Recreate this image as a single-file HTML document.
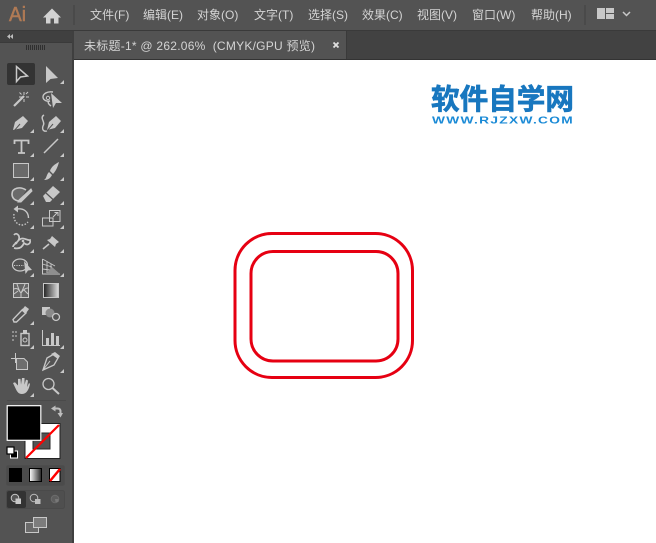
<!DOCTYPE html>
<html><head><meta charset="utf-8">
<style>
html,body{margin:0;padding:0;width:656px;height:543px;overflow:hidden;background:#535353}
svg{display:block}
text{font-family:"Liberation Sans","Noto Sans CJK SC",sans-serif}
.m{font-size:12px;fill:#d4d4d4}
</style></head><body>
<svg width="656" height="543" viewBox="0 0 656 543" xmlns="http://www.w3.org/2000/svg">
<rect width="656" height="543" fill="#535353"/>
<!-- top bar -->
<rect x="0" y="30" width="656" height="1" fill="#3a3a3a"/>
<text x="9" y="21" font-size="20" fill="#b07a55" stroke="#b07a55" stroke-width="0.5" textLength="17" lengthAdjust="spacingAndGlyphs">Ai</text>
<path d="M52 8.500 L43 17.500 H46 V23.500 H50.500 V18.500 H54 V23.500 H58.500 V17.500 H61 Z" fill="#d2d2d2"/>
<rect x="73" y="5" width="2" height="20" fill="#4a4a4a"/>
<text class="m" x="90" y="19">文件(F)</text>
<text class="m" x="143" y="19">编辑(E)</text>
<text class="m" x="197" y="19">对象(O)</text>
<text class="m" x="254" y="19">文字(T)</text>
<text class="m" x="308" y="19">选择(S)</text>
<text class="m" x="362" y="19">效果(C)</text>
<text class="m" x="417" y="19">视图(V)</text>
<text class="m" x="472" y="19">窗口(W)</text>
<text class="m" x="531" y="19">帮助(H)</text>
<rect x="584" y="5" width="2" height="20" fill="#4a4a4a"/>
<rect x="597" y="8" width="8" height="11" fill="#c8c8c8"/><rect x="606" y="8" width="8" height="5" fill="#c8c8c8"/><rect x="606" y="14" width="8" height="5" fill="#c8c8c8"/>
<path d="M623 12 L626.500 15.500 L630 12" fill="none" stroke="#c8c8c8" stroke-width="1.500"/>
<!-- tab bar -->
<rect x="73" y="31" width="583" height="29" fill="#424242"/>
<rect x="74" y="31" width="272" height="28" fill="#535353"/>
<rect x="346" y="31" width="1" height="28" fill="#3a3a3a"/>
<rect x="73" y="59" width="583" height="1" fill="#333"/>
<text x="84" y="50" font-size="12" fill="#d4d4d4" xml:space="preserve" textLength="231">未标题-1* @ 262.06%  (CMYK/GPU 预览)</text>
<path d="M333.500 42.500 L338.500 47.500 M338.500 42.500 L333.500 47.500" stroke="#e0e0e0" stroke-width="1.800"/>
<!-- canvas -->
<rect x="74" y="60" width="582" height="483" fill="#fff"/>
<!-- left panel -->
<rect x="72" y="31" width="2" height="512" fill="#3f3f3f"/>
<rect x="0" y="31" width="72" height="11" fill="#404040"/>
<rect x="0" y="42" width="72" height="1" fill="#3a3a3a"/>
<path d="M10 34 L7 36.500 L10 39 Z M13 34 L10 36.500 L13 39 Z" fill="#bdbdbd"/>
<path d="M26.500 45 v5 M28.500 45 v5 M30.500 45 v5 M32.500 45 v5 M34.500 45 v5 M36.500 45 v5 M38.500 45 v5 M40.500 45 v5 M42.500 45 v5 M44.500 45 v5" stroke="#2f2f2f" stroke-width="1"/>
<!-- selection -->
<rect x="7" y="63" width="28" height="22" rx="2" fill="#333"/>
<path d="M16.500 66.500 V81.500 L20.500 77 L27.500 76 Z" fill="none" stroke="#c8c8c8" stroke-width="1.500"/>
<path d="M46 66 V83 L50.500 79 L58 78 Z" fill="#c8c8c8"/>
<g fill="#c8c8c8">
<path d="M64 80 V84 H60 Z"/>
<path d="M34 129 v4 h-4Z M64 129 v4 h-4Z M34 153 v4 h-4Z M64 153 v4 h-4Z M34 177 v4 h-4Z M64 177 v4 h-4Z M34 201 v4 h-4Z M64 201 v4 h-4Z M34 225 v4 h-4Z M64 225 v4 h-4Z M34 249 v4 h-4Z M64 249 v4 h-4Z M34 273 v4 h-4Z M64 273 v4 h-4Z M34 321 v4 h-4Z M34 345 v4 h-4Z M64 345 v4 h-4Z M64 369 v4 h-4Z M34 393 v4 h-4Z"/>
</g>
<!-- wand -->
<path d="M14 106 L24 96" stroke="#c8c8c8" stroke-width="2.200"/>
<path d="M24 92 v3 M24 99 v3 M19 97 h3 M26 97 h3 M19.500 92.500 l2 2 M28 92 l-2 2" stroke="#c8c8c8" stroke-width="1"/>
<!-- lasso -->
<path d="M53 92 C47 91 43 94 43 97 C43 100 47 102 50 101 M50 101 C47 101 48 104 51 106" fill="none" stroke="#c8c8c8" stroke-width="1.400"/>
<circle cx="48" cy="98" r="1.700" fill="none" stroke="#c8c8c8"/>
<path d="M51 93 L62 103 L56 103 L53 108 Z" fill="#c8c8c8"/>
<!-- pen -->
<path d="M13 130 L15 122 L23 116 L28 121 L22 128 Z" fill="#c8c8c8"/><path d="M24 115 L29 120" stroke="#535353" stroke-width="1"/><path d="M14 131 L20 124" stroke="#535353" stroke-width="1"/>
<path d="M47 130 L49 122 L56 116 L61 121 L55 128 Z" fill="#c8c8c8"/><path d="M47 131 L53 124" stroke="#535353" stroke-width="1"/>
<path d="M44 115 C39 118 46 122 43 126 C42 129 43 132 47 131" fill="none" stroke="#c8c8c8" stroke-width="1.400"/>
<!-- type -->
<path d="M14.500 144 V140.500 H28.500 V144 M21.500 140.500 V153 M18 153 H25" fill="none" stroke="#c8c8c8" stroke-width="1.800"/>
<!-- line -->
<path d="M44 153 L58 139" stroke="#c8c8c8" stroke-width="1.500"/>
<!-- rectangle -->
<rect x="13.500" y="163.500" width="15" height="14" fill="#6a6a6a" stroke="#c8c8c8"/>
<!-- brush -->
<path d="M59 162 C55 164 51 167 50 171 L53 174 C56 171 58 166 59 162 Z M49 172 L52 175 C50 179 47 180 44 180 C47 178 46 175 49 172 Z" fill="#c8c8c8"/>
<!-- blob -->
<path d="M26 190 C20 186 12 188 12 194 C12 199 16 201 20 201" fill="#6a6a6a" stroke="#c8c8c8" stroke-width="1.600"/>
<path d="M19 200 L31 189 L32 191 L21 202 L18 202 Z" fill="#c8c8c8" stroke="#c8c8c8"/>
<!-- eraser -->
<path d="M43 196 L53 186 L60 192 L50 202 L46 202 Z" fill="#c8c8c8"/><path d="M46 193 L53 199.500" stroke="#535353" stroke-width="1.200"/>
<!-- rotate -->
<path d="M17 209 C24 208 28.500 212 28.500 218" fill="none" stroke="#c8c8c8" stroke-width="1.400"/>
<path d="M18 205.500 L13.500 209 L18 212.500 Z" fill="#c8c8c8"/>
<path d="M14 214 C13 220 17 225 22 225 C25 225 27 223 28 222" fill="none" stroke="#c8c8c8" stroke-width="1.400" stroke-dasharray="1.500 1.500"/>
<!-- scale -->
<rect x="42.500" y="218" width="10.500" height="8" fill="none" stroke="#c8c8c8"/>
<rect x="49.500" y="210.500" width="10.500" height="11" fill="none" stroke="#c8c8c8"/>
<path d="M53 217 L57.500 212.500 M54.500 212.500 H58 V216" fill="none" stroke="#c8c8c8"/>
<!-- warp / puppet -->
<path d="M14 235 C16 232 20 235 19 239 C18 243 13 244 13 247 M19 240 C23 236 27 241 30 240 C31 244 27 246 24 243 C22 248 18 249 14 248" fill="none" stroke="#c8c8c8" stroke-width="1.700"/>
<circle cx="16" cy="243" r="1.300" fill="#c8c8c8"/><circle cx="23" cy="241" r="1.300" fill="#c8c8c8"/>
<!-- pin -->
<path d="M52 236 L59 242 L56 244 L55 247 L47 240 L50 239 Z" fill="#c8c8c8"/><path d="M49 244 L43 249" stroke="#c8c8c8" stroke-width="1.600"/>
<!-- shape builder -->
<ellipse cx="20" cy="265" rx="7.500" ry="6" fill="none" stroke="#c8c8c8" stroke-width="1.200"/>
<path d="M14 265.500 H24" stroke="#c8c8c8" stroke-dasharray="1.200 1.200"/>
<path d="M24 261 L32 270 L28 270.500 L25.500 274 Z" fill="#c8c8c8"/>
<!-- perspective -->
<path d="M42.500 259 V274 H60" fill="none" stroke="#c8c8c8"/>
<path d="M42.500 259 L55 266 M42.500 264 L52 267 M42.500 269 L50 270 M47 261 V274 M51 264 V274" fill="none" stroke="#c8c8c8" stroke-width="0.900"/>
<path d="M52 267 L60 274 H46 Z" fill="#8e8e8e"/>
<!-- mesh -->
<rect x="13.500" y="283.500" width="15" height="14" fill="#666" stroke="#c8c8c8"/>
<path d="M14 289 C18 287 19 291 21 293 C23 290 25 288 28 288 M21 293 V297 M17 284 C18 287 19 291 21 293 M25 284 C24 287 23 289 21 293 M14 294 L18 291 M28 294 L24 290" fill="none" stroke="#c8c8c8" stroke-width="1"/>
<!-- gradient -->
<defs><linearGradient id="g"><stop offset="0" stop-color="#222"/><stop offset="1" stop-color="#ddd"/></linearGradient>
<linearGradient id="g2"><stop offset="0" stop-color="#fff"/><stop offset="1" stop-color="#222"/></linearGradient></defs>
<rect x="43.500" y="283.500" width="15" height="14" fill="url(#g)" stroke="#c8c8c8"/>
<!-- eyedropper -->
<path d="M14 322 L13 319.500 L22.500 309.500 L26 313 L16.500 322 Z" fill="none" stroke="#c8c8c8" stroke-width="1.400"/>
<path d="M21.500 310.500 L25 306 L29 309 L25.500 314 Z" fill="#c8c8c8"/>
<!-- blend -->
<rect x="42" y="307" width="8" height="8" fill="#c8c8c8"/><circle cx="50" cy="313" r="4.500" fill="#8a8a8a"/><circle cx="56" cy="317" r="3.500" fill="none" stroke="#c8c8c8" stroke-width="1.300"/>
<!-- symbol sprayer -->
<rect x="21" y="333.500" width="8" height="12" fill="none" stroke="#c8c8c8" stroke-width="1.400"/><rect x="23" y="330" width="4" height="3" fill="#c8c8c8"/><circle cx="25" cy="340" r="2" fill="none" stroke="#c8c8c8"/>
<path d="M12 331 h2v2h-2z M15 331 h2v2h-2z M12 335 h2v2h-2z M15 335 h2v2h-2z M12 339 h2v2h-2z" fill="#8e8e8e"/>
<!-- graph -->
<path d="M42.500 330 V345.500 H60" fill="none" stroke="#c8c8c8"/>
<rect x="46" y="338" width="3" height="7" fill="#c8c8c8"/><rect x="51" y="333" width="3" height="12" fill="#c8c8c8"/><rect x="56" y="336" width="3" height="9" fill="#c8c8c8"/>
<!-- artboard -->
<path d="M16.500 358.500 H24 L27.500 362 V369.500 H16.500 Z" fill="#6e6e6e" stroke="#c8c8c8"/>
<path d="M11 358.500 H21 M15.500 353 V363" stroke="#c8c8c8"/>
<!-- slice -->
<path d="M43 370 L47 358 L54 354 L58 358 L54 365 Z" fill="none" stroke="#c8c8c8" stroke-width="1.300"/>
<path d="M51 354 L55 352 L60 356 L58 359 Z" fill="#c8c8c8"/><path d="M43 370 L50 361" stroke="#c8c8c8"/>
<!-- hand -->
<path transform="translate(0 378) scale(1 .84) translate(0 -375)" d="M15 386 L13 381 L15 380 L18 384 L18 376 L20.500 376 L21 383 L22 375 L24.500 375 L24.500 383 L26 377 L28 378 L27 386 L29 381 L30 382 C29 388 27 394 22 394 C18 394 17 391 15 386 Z" fill="#c8c8c8"/>
<!-- zoom -->
<circle cx="48.500" cy="384" r="5.500" fill="none" stroke="#c8c8c8" stroke-width="1.300"/>
<path d="M52.500 388 L59 394" stroke="#c8c8c8" stroke-width="2"/>
<rect x="7" y="400" width="59" height="1" fill="#4a4a4a"/>
<!-- stroke swatch (back) -->
<rect x="25" y="423.500" width="35" height="35" fill="#fff" stroke="#222" stroke-width="1"/>
<rect x="33" y="433" width="17" height="16" fill="#535353" stroke="#2a2a2a" stroke-width="1"/>
<path d="M26 458 L59 425" stroke="#f00" stroke-width="2.200"/>
<!-- fill swatch -->
<rect x="7.200" y="405.700" width="33.600" height="34.600" fill="#000" stroke="#fff" stroke-width="1.200"/>
<!-- swap -->
<path d="M54.500 408.500 H57.500 Q60.500 408.500 60.500 411.500 V414" fill="none" stroke="#bdbdbd" stroke-width="2"/>
<path d="M55.500 405.500 L51 408.500 L55.500 411.500 Z M57.500 413 L60.500 417.500 L63 413 Z" fill="#bdbdbd"/>
<!-- default -->
<rect x="10.500" y="451" width="7" height="7" fill="#000" stroke="#fff"/>
<rect x="7" y="447" width="7" height="7" fill="#fff" stroke="#000" stroke-width="1.200"/>
<!-- color/gradient/none -->
<rect x="6.500" y="465.500" width="58" height="20" rx="2" fill="#4b4b4b" stroke="#4d4d4d"/>
<rect x="9" y="468" width="13" height="14" fill="#000"/>
<rect x="29.500" y="468.500" width="12" height="13" fill="url(#g2)" stroke="#000"/>
<rect x="49.500" y="468.500" width="10.500" height="13" fill="#fff" stroke="#000"/>
<path d="M50 481 L60 469" stroke="#f00" stroke-width="2.500"/>
<!-- draw modes -->
<rect x="6.500" y="490.500" width="58" height="18" rx="2" fill="#4f4f4f" stroke="#4a4a4a"/>
<rect x="7" y="491" width="19" height="17" rx="2" fill="#333"/>
<circle cx="15" cy="498" r="3.800" fill="#555" stroke="#c8c8c8"/><rect x="15.500" y="498.500" width="5.500" height="5.500" fill="#c8c8c8"/>
<circle cx="34" cy="498" r="3.800" fill="none" stroke="#bdbdbd"/><rect x="35" y="499" width="5.500" height="5" fill="#bdbdbd"/>
<circle cx="55" cy="499" r="3.800" fill="#5e5e5e" stroke="#6c6c6c"/><path d="M55 499 h3.500 v3 h-3z" fill="#787878"/>
<!-- screen mode -->
<rect x="25.500" y="522.500" width="13" height="10" fill="#6a6a6a" stroke="#c8c8c8"/>
<rect x="33.500" y="517.500" width="13" height="10" fill="#7c7c7c" stroke="#c8c8c8"/>
<!-- logo -->
<text x="431" y="109" font-size="28.600" font-weight="bold" fill="#1877bf" stroke="#1877bf" stroke-width="0.700" textLength="143" style="font-family:'Noto Sans CJK SC',sans-serif">软件自学网</text>
<text x="432" y="123.500" font-size="10.500" font-weight="bold" fill="#1a8ad6" letter-spacing="1" textLength="142" lengthAdjust="spacingAndGlyphs">WWW.RJZXW.COM</text>
<!-- rounded rects -->
<rect x="235" y="233.500" width="177.500" height="144" rx="37" fill="none" stroke="#e60012" stroke-width="3"/>
<rect x="251" y="251.500" width="147" height="109.500" rx="22" fill="none" stroke="#e60012" stroke-width="3"/>
</svg>
</body></html>
